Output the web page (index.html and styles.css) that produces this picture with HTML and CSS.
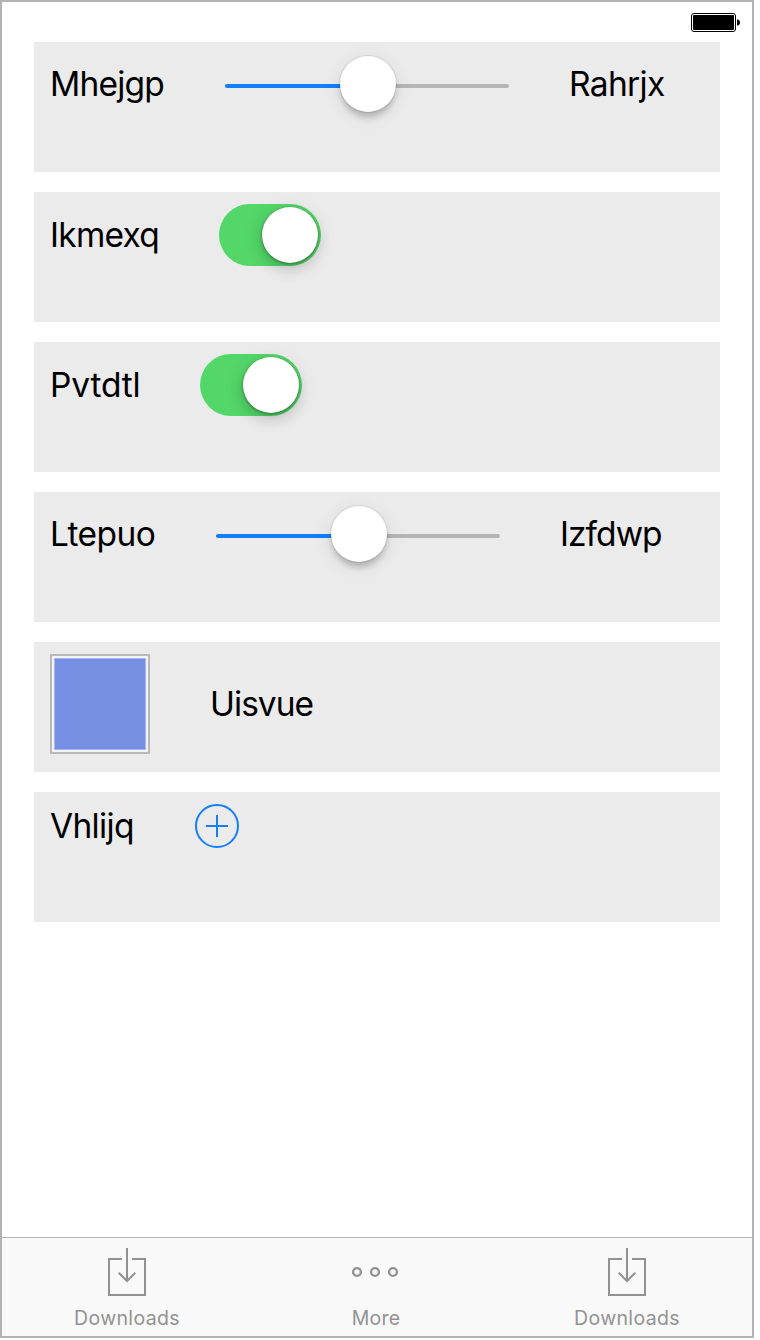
FILE: index.html
```html
<!DOCTYPE html>
<html lang="en">
<head>
<meta charset="utf-8">
<title>Controls</title>
<link rel="stylesheet" href="styles.css">
</head>
<body>
<div class="phone">
  <header class="status">
    <svg class="battery" width="50" height="20" viewBox="0 0 50 20">
      <rect x="0.5" y="0.5" width="44" height="18" rx="2.5" fill="#fff" stroke="#000"/>
      <rect x="2" y="2" width="41" height="15" rx="1" fill="#000"/>
      <path d="M46 6.2Q49 6.8 49 9.5T46 12.8Z" fill="#000"/>
    </svg>
  </header>
  <main class="rows">
    <section class="row row-slider">
      <span class="label label-mhejgp">Mhejgp</span>
      <div class="slider"><span class="fill"></span><span class="knob"></span></div>
      <span class="label label-rahrjx">Rahrjx</span>
    </section>
    <section class="row row-toggle">
      <span class="label label-ikmexq">Ikmexq</span>
      <div class="toggle"><span class="knob"></span></div>
    </section>
    <section class="row row-toggle">
      <span class="label label-pvtdtl">Pvtdtl</span>
      <div class="toggle"><span class="knob"></span></div>
    </section>
    <section class="row row-slider">
      <span class="label label-ltepuo">Ltepuo</span>
      <div class="slider"><span class="fill"></span><span class="knob"></span></div>
      <span class="label label-izfdwp">Izfdwp</span>
    </section>
    <section class="row row-swatch">
      <div class="swatch"></div>
      <span class="label label-uisvue">Uisvue</span>
    </section>
    <section class="row row-add">
      <span class="label label-vhlijq">Vhlijq</span>
      <svg width="44" height="44" viewBox="0 0 44 44" fill="none" stroke="#147efb" stroke-width="2">
        <circle cx="22" cy="22" r="21"/>
        <path d="M11 22H33M22 11V33"/>
      </svg>
    </section>
  </main>
  <nav class="tabs">
    <div class="tab">
      <svg class="tab-icon" width="38" height="48" viewBox="0 0 38 48" fill="none" stroke="#929292" stroke-width="2">
        <path d="M14 11H1V47H37V11H24M19 0V33M10.7 24.7L19 33L27.3 24.7"/>
      </svg>
      <span class="tab-label">Downloads</span>
    </div>
    <div class="tab">
      <svg class="tab-icon" width="52" height="48" viewBox="-2 0 52 48" fill="none" stroke="#929292" stroke-width="2.4">
        <circle cx="4" cy="24" r="3.9"/><circle cx="22" cy="24" r="3.9"/><circle cx="40" cy="24" r="3.9"/>
      </svg>
      <span class="tab-label tab-label-more">More</span>
    </div>
    <div class="tab">
      <svg class="tab-icon" width="38" height="48" viewBox="0 0 38 48" fill="none" stroke="#929292" stroke-width="2">
        <path d="M14 11H1V47H37V11H24M19 0V33M10.7 24.7L19 33L27.3 24.7"/>
      </svg>
      <span class="tab-label">Downloads</span>
    </div>
  </nav>
</div>
</body>
</html>
```
FILE: styles.css
```css
* { box-sizing: border-box; }
body { margin: 0; background: #fff; font-family: Inter, "Liberation Sans", sans-serif; }
.phone { width: 754px; height: 1338px; border: 2px solid #b3b3b3; display: flex; flex-direction: column; }
.status { height: 40px; flex: none; padding: 11px 11px 0 0; display: flex; justify-content: flex-end; }
.rows { flex: 1; padding: 0 32px; display: flex; flex-direction: column; gap: 20px; }
.row { height: 130px; padding: 12px 16px; background: #ebebeb; display: flex; align-items: flex-start; gap: 60px; }
.label { flex: none; font-size: 33.5px; line-height: 62px; color: #000; white-space: nowrap; }
.row-slider .label { line-height: 61px; }
.row-swatch .label { line-height: 101px; }
.row-add .label { line-height: 45px; }
.label-mhejgp { width: 115px; letter-spacing: -0.8px; }
.label-ikmexq { width: 109px; letter-spacing: -0.75px; }
.label-pvtdtl { width: 90px; letter-spacing: -0.15px; }
.label-ltepuo { width: 106px; letter-spacing: -0.6px; }
.label-vhlijq { width: 85px; letter-spacing: -0.65px; }
.label-rahrjx { letter-spacing: -0.65px; }
.label-izfdwp, .label-uisvue { letter-spacing: -0.95px; }
.slider { width: 284px; height: 4px; margin-top: 30px; border-radius: 2px; background: #b5b5b5; display: flex; align-items: center; }
.fill { width: 143px; height: 4px; border-radius: 2px; background: #147efb; }
.knob { flex: none; width: 56px; height: 56px; border-radius: 50%; background: #fff; }
.slider .knob { margin: -4px 0 0 -28px; box-shadow: 0 0 1px 1px rgba(0,0,0,.07), 0 6px 6px -1px rgba(0,0,0,.2), 0 4px 20px rgba(0,0,0,.09); }
.toggle { width: 102px; height: 62px; padding: 3px; border-radius: 31px; background: #53d769; display: flex; justify-content: flex-end; }
.toggle .knob { box-shadow: 0 1px 3px rgba(0,0,0,.4), 0 6px 14px rgba(0,0,0,.16), 0 3px 24px rgba(0,0,0,.07); }
.swatch { width: 100px; height: 100px; padding: 3px; border: 2px solid #b9b9b9; background: #f1f3fa; display: flex; }
.swatch::before { content: ""; flex: 1; background: #768fe2; outline: 1px solid rgba(118,143,226,.6); }
.tabs { height: 99px; flex: none; padding: 0 1px; border-top: 1px solid #b2b2b2; background: #f9f9f9; display: flex; }
.tab { width: 250px; height: 98px; padding-top: 10px; display: flex; flex-direction: column; align-items: center; flex: none; margin-left: -1px; margin-right: 1px; }
.tab-label { margin-top: 10px; font-size: 19.5px; line-height: 24px; letter-spacing: .35px; color: #929292; }
.tab-label-more { padding-right: 2px; letter-spacing: .2px; }
```
